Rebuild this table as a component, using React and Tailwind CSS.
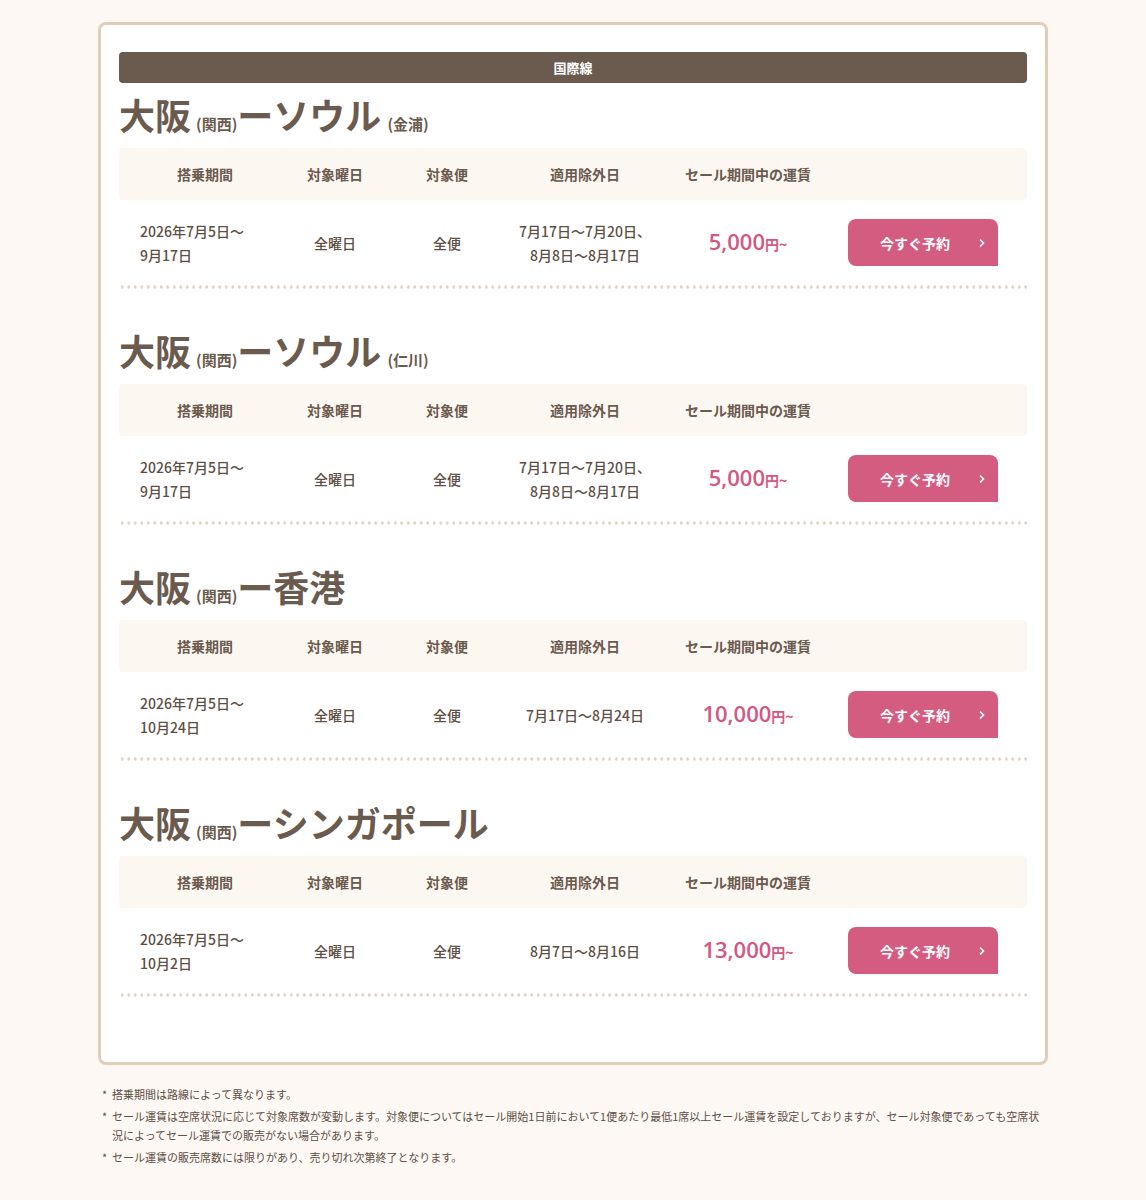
const routes = [
  {
    to: "ーソウル",
    sub: "(金浦)",
    period: ["2026年7月5日〜", "9月17日"],
    excl: ["7月17日〜7月20日、", "8月8日〜8月17日"],
    price: "5,000",
  },
  {
    to: "ーソウル",
    sub: "(仁川)",
    period: ["2026年7月5日〜", "9月17日"],
    excl: ["7月17日〜7月20日、", "8月8日〜8月17日"],
    price: "5,000",
  },
  {
    to: "ー香港",
    sub: "",
    period: ["2026年7月5日〜", "10月24日"],
    excl: ["7月17日〜8月24日"],
    price: "10,000",
  },
  {
    to: "ーシンガポール",
    sub: "",
    period: ["2026年7月5日〜", "10月2日"],
    excl: ["8月7日〜8月16日"],
    price: "13,000",
  },
];

const notes = [
  "搭乗期間は路線によって異なります。",
  "セール運賃は空席状況に応じて対象席数が変動します。対象便についてはセール開始1日前において1便あたり最低1席以上セール運賃を設定しておりますが、セール対象便であっても空席状況によってセール運賃での販売がない場合があります。",
  "セール運賃の販売席数には限りがあり、売り切れ次第終了となります。",
];

function Route({ route, first }) {
  return (
    <div className={first ? "mt-[10px]" : "mt-[40px]"}>
      <h2 className="flex items-baseline h-[42px] text-[#6b5a4e] font-bold leading-[42px]">
        <span className="text-[36px]">大阪</span>
        <span className="text-[15px] ml-[5px]">(関西)</span>
        <span className="text-[36px]">{route.to}</span>
        {route.sub && <span className="text-[15px] ml-[6px]">{route.sub}</span>}
      </h2>
      <div className="mt-[13px]">
        <div className="flex items-center h-[52px] bg-[#fdf7f2] rounded-[4px] text-[14px] font-bold text-[#6b5a4e]">
          <div className="w-[172px] text-center">搭乗期間</div>
          <div className="w-[88px] text-center">対象曜日</div>
          <div className="w-[136px] text-center">対象便</div>
          <div className="w-[140px] text-center">適用除外日</div>
          <div className="w-[186px] text-center">セール期間中の運賃</div>
          <div className="flex-1"></div>
        </div>
        <div className="flex items-center h-[85px] text-[14px] font-medium text-[#5e4e44] leading-[24px]">
          <div className="w-[172px] pl-[21px]">
            {route.period.map((l) => (
              <div key={l}>{l}</div>
            ))}
          </div>
          <div className="w-[88px] text-center">全曜日</div>
          <div className="w-[136px] text-center">全便</div>
          <div className="w-[140px] text-center">
            {route.excl.map((l) => (
              <div key={l}>{l}</div>
            ))}
          </div>
          <div className="w-[186px] text-center text-[#d4577f] font-semibold">
            <span className="text-[22px]" style={{ fontFamily: '"Open Sans", sans-serif' }}>
              {route.price}
            </span>
            <span className="text-[14px]">円~</span>
          </div>
          <div className="flex-1 pl-[7px]">
            <button className="relative block w-[150px] h-[47px] bg-[#d55c81] text-white text-[14px] font-bold rounded-[8px] rounded-br-none">
              <span className="absolute left-[32px] top-1/2 -translate-y-1/2">今すぐ予約</span>
              <svg
                className="absolute right-[12px] top-1/2 -translate-y-1/2"
                width="8"
                height="10"
                viewBox="0 0 8 10"
                fill="none"
                stroke="white"
                strokeWidth="1.6"
              >
                <path d="M2 1.5L5.5 5L2 8.5" />
              </svg>
            </button>
          </div>
        </div>
        <div className="h-[4px] bg-[radial-gradient(circle,#e3d3c3_1.5px,transparent_1.8px)] bg-[length:6.5px_4px]"></div>
      </div>
    </div>
  );
}

export default function App() {
  return (
    <div
      className="min-h-screen bg-[#fdf8f4] pt-[22px] pb-[30px]"
      style={{ fontFamily: '"Noto Sans CJK JP", "Noto Sans", sans-serif' }}
    >
      <div className="mx-auto w-[950px] bg-white border-[3px] border-[#e2cdb8] rounded-[8px] px-[18px] pt-[27px] pb-[65px]">
        <div className="h-[31px] bg-[#6b5a4e] rounded-[4px] flex items-center justify-center text-white text-[13px] font-bold">
          国際線
        </div>
        {routes.map((r, i) => (
          <Route key={i} route={r} first={i === 0} />
        ))}
      </div>
      <div className="mx-auto w-[950px] mt-[20px] pl-[4px] pr-[4px] text-[11px] text-[#5e4e44] leading-[19px]">
        {notes.map((n) => (
          <div key={n} className="flex mb-[3px]">
            <span className="w-[10px] shrink-0">*</span>
            <span>{n}</span>
          </div>
        ))}
      </div>
    </div>
  );
}
